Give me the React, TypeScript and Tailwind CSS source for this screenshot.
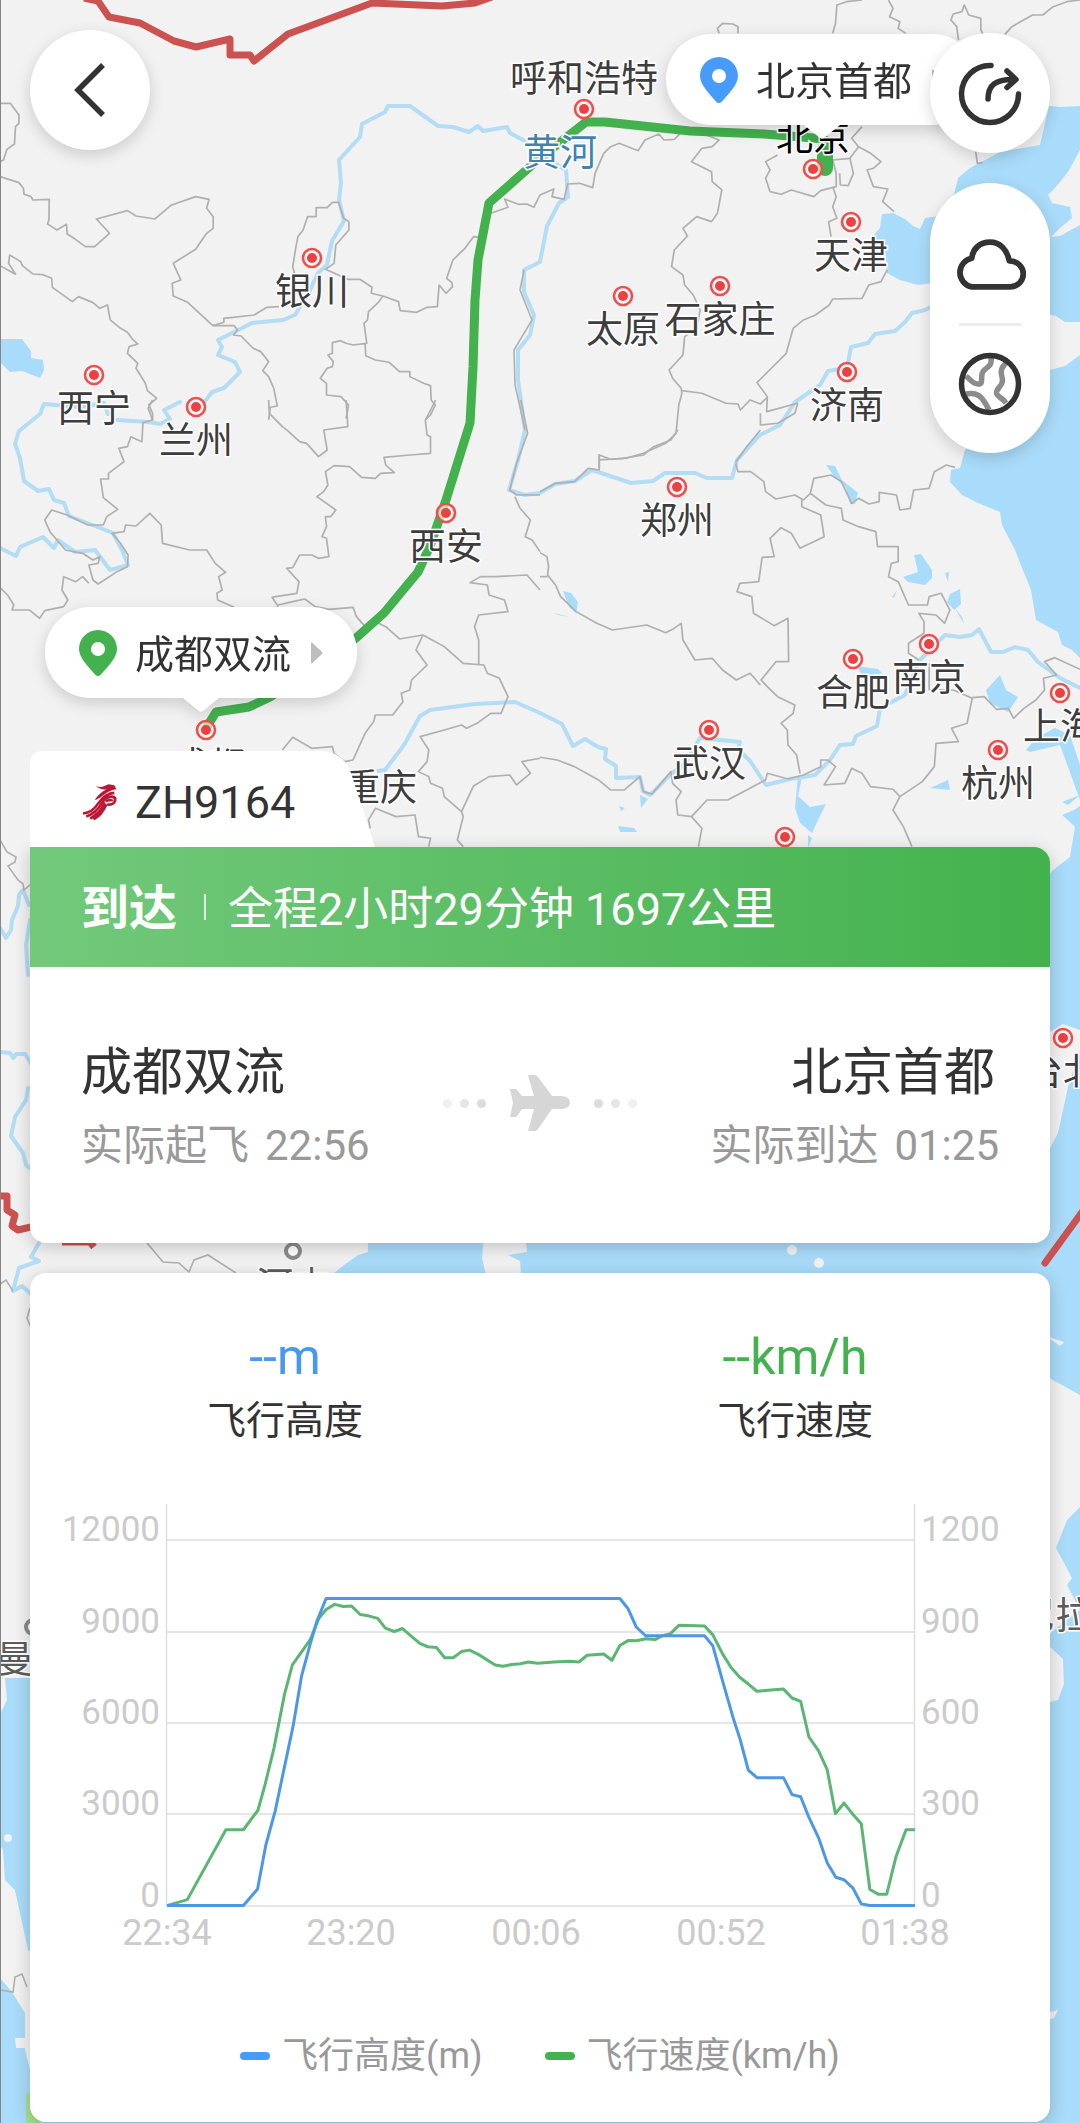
import { ReactNode } from 'react'

type City = { name: string; x: number; y: number; labelX?: number; labelY?: number; kind?: 'capital' | 'foreign' }

const cities: City[] = [
    { name: '呼和浩特', x: 584, y: 109, labelY: 92 },
    { name: '北京', x: 813, y: 169, labelY: 151, kind: 'capital' },
    { name: '天津', x: 851, y: 222 },
    { name: '石家庄', x: 720, y: 286 },
    { name: '太原', x: 623, y: 296 },
    { name: '济南', x: 847, y: 372 },
    { name: '银川', x: 312, y: 258 },
    { name: '西宁', x: 94, y: 375 },
    { name: '兰州', x: 196, y: 407 },
    { name: '西安', x: 446, y: 513 },
    { name: '郑州', x: 677, y: 487 },
    { name: '合肥', x: 853, y: 659 },
    { name: '南京', x: 929, y: 644 },
    { name: '上海', x: 1060, y: 693 },
    { name: '武汉', x: 709, y: 730 },
    { name: '杭州', x: 998, y: 750 },
    { name: '成都', x: 206, y: 730, labelX: 208, labelY: 779 },
    { name: '重庆', x: 352, y: 790, labelX: 380, labelY: 801 },
    { name: '', x: 785, y: 837 },
    { name: '台北', x: 1063, y: 1038 },
    { name: '河内', x: 293, y: 1251, kind: 'foreign', labelY: 1299 },
    { name: '曼谷', x: 33, y: 1627, kind: 'foreign', labelY: 1673 },
    { name: '马尼拉', x: 1037, y: 1580, kind: 'foreign', labelY: 1629 },
]

// province borders, one list per map tile
const northWest = [
    '0,310 30,310 55,345 55,370 45,380 42,432 20,448 10,480 0,485',
    '0,530 55,548 68,565 70,583 90,590 95,600 143,598 142,660 138,672 150,680 165,690 193,673 195,702 215,715 248,740 275,740 318,700 280,657 370,632 395,648 450,657 498,615 568,590 607,598 600,625 619,650 619,685 600,700 568,748 503,790 525,840 500,850 503,888 545,907 618,977 650,967 650,955 738,945 775,922 810,920',
    '0,797 45,823 25,790 28,765 60,785 65,797 95,822 125,824 150,835 152,862 210,905 228,890 270,908 290,925 312,915 320,960 350,985 370,997 385,1018 400,1032 375,1040 370,1060 400,1090 395,1105 422,1150 428,1172 455,1195 432,1215 443,1240 443,1260',
    '618,977 680,977 690,990 678,1005 700,1008 735,1045 757,1055 780,1085 763,1112 780,1130 795,1165 805,1218 785,1222 780,1260',
    '855,820 850,800 858,748 865,710 880,690 893,650 918,650 918,623 950,623 965,607 983,607 998,655 1013,665 1013,690 975,735 970,790 945,808 1010,838 1045,838 1080,862 1078,880 1112,888 1157,905 1162,932 1190,935 1210,937 1240,922 1270,920 1275,855 1295,880 1314,860 1312,848 1297,835 1315,780 1350,745 1375,710 1390,712',
    '1112,888 1098,908 1070,935 1067,960 1057,970 1065,1030 1025,1035 1005,1030 988,1022 965,1028 965,1060 952,1065 968,1085 965,1100 950,1105 930,1135 948,1150 948,1185 990,1190 1012,1215 1005,1255',
    '1060,1030 1062,1067 1090,1080 1130,1087 1160,1115 1190,1115 1190,1130 1230,1150 1250,1157 1252,1200 1264,1215 1250,1245 1235,1260',
    '1425,640 1475,622 1465,597 1505,613 1530,612 1550,622 1568,585',
]

const northEast = [
    '0,585 40,567 35,590 70,598 80,552 115,550 153,563 160,520 185,460 205,440 230,430 285,452 305,420 345,402 360,420 390,418 410,398 470,400 520,420 500,440 470,445 440,485 498,515 500,545 528,570 515,640 498,665 455,650 415,685 428,708 390,750 382,800 415,825 420,855 445,885 465,930 455,985 420,1010 415,1065 375,1110 385,1135 410,1165 412,1180 403,1215 395,1300 365,1330 300,1360 250,1375 172,1380 172,1365 172,1405',
    '520,100 515,85 530,70 560,72 575,80 575,100',
    '850,100 858,70 862,15 890,5 935,0',
    '1012,0 1025,25 1015,50 1045,65 1040,85 1062,100',
    '1215,120 1210,80 1193,60 1200,42 1225,35 1232,15 1245,45 1280,55 1280,90 1290,110',
    '1350,103 1370,80 1430,45 1460,45 1490,20 1530,5 1568,0',
    '690,465 655,485 668,510 655,535 668,575 700,583 730,570 795,590 815,572 860,560 860,520 850,480 900,475 925,440 905,415 935,380',
    '925,440 960,460 990,485 968,505 950,510 968,560 1010,567 995,605 1028,635',
    '900,475 910,520 895,557 872,555 870,520',
    '850,560 860,590 850,620 862,655 838,665 845,710',
    '1008,810 990,845 955,855 935,895 850,897 840,915 800,945 765,960 735,985 715,1060 630,1148 660,1190 658,1235 748,1210 740,1240 690,1270 640,1275 640,1240',
    '412,1172 470,1180 540,1210 575,1212 582,1230 610,1200 640,1212 660,1192',
    '1265,455 1270,490 1285,488',
]

const southWest = [
    '443,0 430,25 443,60 415,68 412,125 380,110 370,140 345,145 360,185 315,220 315,237 292,237 300,293 342,328 310,350 300,375 255,375 195,345 150,330 130,360 145,395 190,450 240,460 270,480 290,470 285,490 258,495 270,540 285,552 340,515 370,500 372,465 350,430 325,400 360,395 365,375 395,378 435,340 468,375 472,430 550,450 600,450 625,490 655,517 635,530 645,570 630,580 632,600 680,622',
    '0,563 22,585 40,615 35,630 85,630 115,655 130,632 185,620 197,600 180,570 185,530 220,545 240,530 258,550',
    '780,0 782,40 820,80 835,92 870,125 890,130 925,170 950,150 940,90 1010,80 1005,0',
    '1265,0 1235,60 1240,105 1250,110 1250,160 1190,165 1115,172 1120,195 1145,218 1105,220 1090,235 1050,232 1015,200 970,197 945,215 952,255 940,275 920,290 975,330 960,350 945,350 948,380 935,410 948,415 955,470 925,475 905,465 870,465 850,503 832,505 868,545 862,580 800,590 790,592 808,620',
    '808,615 850,605 885,597 915,620 955,628 1025,622 1035,650 1060,680 1080,660 1120,680 1160,717 1228,705 1290,740 1345,790 1405,795 1415,820 1450,835 1475,890 1455,940 1425,940 1385,970 1355,985 1340,975 1290,990 1220,1010 1245,1050 1240,1085 1215,1115 1245,1130 1250,1150 1285,1165 1290,1190 1340,1235 1345,1250 1328,1320 1345,1340',
    '1228,705 1208,750 1240,795 1195,840 1190,870 1165,880 1170,905 1140,945 1090,945 1085,965 1060,1000 1025,1080 1000,1085 970,1060 965,1040 905,1045 850,1012 820,1050',
    '1568,570 1530,525 1440,530 1395,530 1365,548 1415,555 1420,585 1465,600 1475,635 1390,645 1378,680 1390,720 1390,795',
    '1340,1235 1375,1158 1420,1130 1480,1125 1500,1155 1540,1120 1515,1085 1568,1075',
    '1075,1285 1070,1260 1090,1225 1150,1250 1205,1245 1215,1310 1250,1315 1245,1340',
    '1495,290 1510,325 1540,360 1525,410 1545,420 1568,455',
    '1512,0 1532,100 1500,190 1480,270 1500,285 1568,285',
]

const southEast = [
    '0,185 45,160 100,155 140,115 172,120 172,75 205,88 240,85 300,75 330,50 380,30 400,0',
    '568,100 575,125 612,125 650,155 655,185 685,207 740,195 765,210 785,190 795,145 845,135 875,155 905,220 925,205 955,222 985,215 985,187 1035,195 1045,240 1075,235 1085,180 1130,175 1145,125 1180,105 1205,112',
    '640,0 600,50 568,97',
    '760,210 760,230 815,255 825,320 755,355 730,310 700,293 668,325 680,380 645,382 635,455 580,460 572,485 615,500 620,550 680,587 720,565 722,695 685,695 642,750 660,770 690,800 740,825 735,850 700,880 718,900 720,945 745,975 755,1030',
    '785,190 830,225 875,235 880,270 925,290 975,305 980,350 1040,350 1040,395 1020,400 1012,440 1040,455 1070,525 1125,525 1130,500 1165,490 1190,540 1175,580 1150,555 1100,550 1115,575 1115,610 1070,640 1070,670 1100,690',
    '0,368 20,380 25,410 22,435 45,465 60,500 105,545 165,580 210,600 310,585 365,608 385,598 410,580 415,630 450,690 500,685 530,720 570,750 610,730 640,765',
    '0,440 22,440',
    '1130,700 1130,780 1200,780 1255,805 1240,880 1195,895 1215,935 1150,940 1145,1010 1110,1055 1045,1100 1025,1140 1055,1190 1080,1250',
    '1255,803 1290,800 1325,838 1360,835 1375,865 1405,835 1440,810 1465,780 1462,745 1500,735 1465,695 1495,683 1568,718',
    '1045,1100 1025,1078 960,1070 935,1030 905,1015 885,1060 825,1065 858,1010 835,990 815,990 815,1010 765,1035 720,1047 660,1030 655,1050 600,1080 545,1110 485,1110 440,1160 470,1195 460,1250',
    '440,1160 400,1155 395,1110 410,1085 385,1060 380,1025 325,1092 300,1085 290,1040 245,1080 205,1080 170,1050 100,1010 50,990 0,982',
]

const altitude =
    '484,1053 706,1053 747,1014 771,910 798,830 850,630 875,510 900,435 920,380 946,328 1799,328 1822,351 1847,396 1874,416 2045,416 2069,440 2098,525 2128,610 2148,660 2172,733 2197,751 2274,751 2299,791 2324,796 2348,845 2376,893 2401,952 2426,986 2450,992 2476,1012 2500,1049 2525,1053 2656,1053'

const speed =
    '484,1053 543,1039 655,874 706,874 748,828 768,770 795,680 825,555 848,485 900,425 925,375 946,354 971,342 996,347 1020,346 1045,366 1069,369 1096,375 1118,398 1144,406 1168,399 1193,417 1218,434 1241,442 1267,444 1290,468 1315,468 1340,453 1362,450 1388,460 1437,485 1460,488 1485,484 1510,482 1533,478 1560,481 1608,478 1653,476 1680,478 1704,462 1752,459 1776,474 1799,439 1824,427 1847,428 1874,423 1901,425 1923,416 1946,411 1971,391 2045,393 2069,414 2098,460 2122,491 2147,514 2172,530 2197,547 2274,542 2299,563 2324,571 2348,655 2376,688 2401,732 2425,836 2450,811 2476,838 2500,860 2525,1015 2549,1026 2574,1026 2601,937 2630,874 2656,874'

const gridLines = [
    { y: 50, left: '12000', right: '1200' },
    { y: 142, left: '9000', right: '900' },
    { y: 233, left: '6000', right: '600' },
    { y: 324, left: '3000', right: '300' },
    { y: 416, left: '0', right: '0' },
]

const times = [
    { x: 137, label: '22:34' },
    { x: 321, label: '23:20' },
    { x: 506, label: '00:06' },
    { x: 691, label: '00:52' },
    { x: 875, label: '01:38' },
]

function Borders({ lines, transform }: { lines: string[]; transform: string }) {
    return (
        <g transform={transform} fill="none" stroke="#b0b0b0" strokeWidth="5" strokeLinejoin="round">
            {lines.map((points) => (
                <polyline key={points} points={points} />
            ))}
        </g>
    )
}

function CityMark({ city }: { city: City }) {
    const foreign = city.kind === 'foreign'
    const color = city.kind === 'capital' ? '#000' : foreign ? '#5c5c5c' : '#3d3d3d'

    return (
        <g>
            {foreign ? (
                <circle cx={city.x} cy={city.y} r="7" fill="#fff" stroke="#8a8a8a" strokeWidth="4" />
            ) : city.name !== '重庆' && (
                <>
                    <circle cx={city.x} cy={city.y} r="9" fill="#fff" fillOpacity="0.6" stroke="#ee4f4c" strokeWidth="2.6" />
                    <circle cx={city.x} cy={city.y} r="5" fill="#ee4040" />
                </>
            )}
            <text
                x={city.labelX ?? city.x}
                y={city.labelY ?? city.y + 47}
                textAnchor="middle"
                fontSize="37"
                fill={color}
                stroke="#fff"
                strokeWidth="3"
                paintOrder="stroke">
                {city.name}
            </text>
        </g>
    )
}

function MapBackground() {
    return (
        <svg
            className="absolute inset-0 h-full w-full"
            viewBox="0 0 1080 2123"
            preserveAspectRatio="xMidYMin slice"
            aria-hidden="true">
            <rect width="1080" height="2123" fill="#f2f2f2" />

            {/* seas and lakes */}
            <g fill="#a9dcfa">
                <path d="M882 214 893 213 905 219 913 226 920 229 925 218 940 216 954 195 958 178 970 168 1000 152 1040 145 1049 106 1060 107 1080 106V150L1068 172 1055 188 1048 195 1052 203 1070 207 1072 218 1060 228 1051 237 1060 236 1080 225V322L1065 322 1056 316 1040 312 1000 275 932 283 918 285 900 280 887 273 885 250 873 236 880 228Z" />
                <path d="M1080 355 1065 366 1050 370 1000 420 965 450 960 468 951 470 950 482 962 495 978 503 1000 512 1002 525 1015 550 1022 568 1031 590 1036 620 1058 632 1062 645 1072 650 1080 658Z" />
                <path d="M1026 750 1036 738 1055 728 1070 735 1080 765V800L1060 745 1030 752Z" />
                <path d="M1080 806 1074 810 1062 815 1070 822 1075 827 1070 857 1053 870 1040 885 900 1080 600 1160 367 1200 368 1252 358 1255 344 1265 334 1273 334 1330 1030 1360 1051 1379 1080 1395Z" />
                <path d="M1080 1507 1067 1520 1056 1548 1072 1578 1067 1585 1080 1610 1060 1625 1051 1633 1040 1650V2123H1080Z" />
                <path d="M5 1678H40V1960L28 1950 15 1890 5 1880 3 1850 0 1845V1714L7 1700ZM0 1978 12 1992 25 2013V2050L30 2070V2123H0Z" />
                <path d="M0 2116H1080V2123H0Z" />
                <path d="M0 339H22L31 351 31 358 43 360 44 370 40 378 22 371 10 372 0 362Z" />
                <path d="M826 465 835 466 842 480 858 493 855 504 850 504 846 488 834 476Z" />
                <path d="M914 555 921 554 932 570 932 578 925 585 908 582 903 577 918 572ZM950 594 960 589 961 604 954 610 947 602ZM954 607 962 617 964 624ZM945 573 949 572 948 582ZM892 597 897 590 894 598Z" />
                <path d="M856 666 878 669 882 673 865 679ZM986 690 1000 675 1006 690 1018 697 1008 712 990 703ZM563 591 571 593 578 602 576 613 569 607ZM554 613 570 617 558 615Z" />
                <path d="M798 775 802 777 798 796 810 807 826 804 818 820 812 833 800 823 795 808ZM808 835 812 838 808 848ZM640 795 648 799 641 808ZM619 806 625 808 621 811ZM618 826 634 828 637 832 620 832ZM930 788 948 780 950 790ZM1062 802 1080 795 1068 805Z" />
            </g>
            <g fill="#f2f2f2">
                <path d="M1050 1032 1063 1024 1080 1030V1050L1068 1087 1058 1133 1048 1152Z" />
                <path d="M484 1235 482 1258 486 1275H521L520 1261 508 1255 527 1252 525 1235Z" />
                <circle cx="792" cy="1250" r="5" />
                <circle cx="819" cy="1263" r="5" />
                <path d="M1045 1642 1063 1659 1064 1684 1058 1700 1045 1703ZM1046 1336 1064 1342 1060 1346ZM1050 2012 1058 2010 1054 2018 1048 2020Z" />
                <circle cx="8" cy="1838" r="4" />
                <path d="M15 2038H30V2048H16Z" />
            </g>
            <path d="M26 2094 40 2090V2123H26Z" fill="#a5e08c" />

            {/* rivers */}
            <g fill="none" stroke="#b3dcf5" strokeWidth="4" strokeLinejoin="round" strokeLinecap="round">
                <path d="M534 146 510 133 507 127 483 131 478 126 469 132 453 127 438 126 410 106 388 106 385 112 362 124 360 137 339 160 341 183 339 200 344 221 332 241 327 265 318 273 310 290 295 315 283 320 252 323 218 340 222 347 218 355 235 362 240 372 224 388 212 392 203 404 195 407M180 402 164 410 170 419 160 424 148 422 117 420M108 414 104 403 80 407 44 404 40 414 19 431 15 444 20 458 24 481 38 491 49 489 54 500 64 503 69 516 95 526 113 533 122 550 128 565 110 570 95 550 75 552 58 540 54 548 43 537 20 547 16 556 0 548" />
                <path d="M546 158 566 170 568 197 559 203 547 226 540 262 524 270V292L534 315 530 335 518 350 518 380 525 430 518 460 509 490 525 495 540 493 555 484 575 481 592 470 631 483 653 481 665 473 695 473 707 478 732 478 737 460 760 435 780 425 795 402 820 385 828 371 847 368 851 347 868 343 875 334 895 331 905 322 912 313 925 310 945 300" />
                <path d="M378 771 385 770 404 745 420 716 430 710 475 704 515 702 540 713 548 717 562 724 573 746 585 739 598 747 606 749 605 759 616 766V778L640 777 643 791 650 795 672 773 684 765 700 738 720 740 740 742 738 749 750 761 766 785 790 779 815 775 830 760 840 745 853 744 856 736 877 726 880 708 905 695 920 660 930 650 945 635 960 637 972 635 979 629 991 652 1003 652 1015 647 1028 650 1038 662 1060 678 1080 688" />
                <path d="M0 928 6 938 11 930 12 920 18 906 19 895 23 890 29 905M30 920 26 945 28 975M0 1052 10 1053 13 1058 16 1054 25 1054 32 1065M28 1088 26 1100 15 1117 11 1136 23 1153 26 1165 32 1170M39 1243 31 1257 39 1261 19 1268 13 1291 22 1286 32 1295" />
            </g>

            <Borders lines={northWest} transform="scale(.3444 .3333)" />
            <Borders lines={northEast} transform="translate(540 0) scale(.3444 .3333)" />
            <Borders lines={southWest} transform="translate(0 400) scale(.3444 .3333)" />
            <Borders lines={southEast} transform="translate(540 430) scale(.3444 .3333)" />
            <path
                d="M0 840 7 852 16 857 15 862 8 866 18 880 23 884 24 890 31 884M524 270 520 290 532 320 514 350 515 385 525 430M147 1243 163 1262 179 1263 189 1272 194 1260 208 1255 236 1273M0 1284 6 1280 13 1291M30 1308 27 1318 31 1328M0 1990 13 1992 15 1977 22 1974 27 1987"
                fill="none"
                stroke="#b0b0b0"
                strokeWidth="1.6"
            />

            {/* national borders */}
            <g fill="none" stroke="#cb5250" strokeWidth="7" strokeLinejoin="round">
                <path d="M84 -2 98 1 109 17 140 23 174 41 196 47 230 39V55H250L254 61 288 34 372 3 442 6 475 3 492 -3" />
                <path d="M0 1196H7V1210L15 1215 12 1226 18 1230 31 1227M62 1242 90 1242 94 1247" />
                <path d="M1045 1263 1085 1208" strokeLinecap="round" />
            </g>

            {/* flown route */}
            <g fill="none" stroke="#42b14e" strokeLinejoin="round" strokeLinecap="round">
                <path
                    d="M205 730 216 712 249 707 270 697 310 672 356 638 384 613 418 572 430 546 446 500 470 423 473 367 475 300 478 260 489 203 540 158 586 122 605 122 690 131 764 134 802 137 824 139"
                    strokeWidth="9"
                />
                <path d="M825 150V168" strokeWidth="16" />
            </g>

            {cities.map((city) => (
                <CityMark key={city.name + city.x} city={city} />
            ))}
            <text x="560" y="166" textAnchor="middle" fontSize="37" fill="#3f83b0" stroke="#fff" strokeWidth="3" paintOrder="stroke">
                黄河
            </text>
            <rect width="1" height="2123" fill="#858585" />
        </svg>
    )
}

function AirportCallout({ name, className }: { name: string; className: string }) {
    return (
        <button
            type="button"
            className={`absolute flex h-[91px] items-center rounded-full bg-white px-[34px] text-[39px] leading-none text-[#333] drop-shadow-[0_5px_8px_rgba(0,0,0,0.16)] ${className}`}>
            <svg className="h-[46px] w-[38px]" viewBox="0 0 38 46" aria-hidden="true">
                <path
                    d="M19 0C8.500 0 0 8.500 0 19c0 9 9 17 16.500 26q2.500 2 5 0C29 36 38 28 38 19 38 8.500 29.500 0 19 0Zm0 12a7 7 0 1 1 0 14 7 7 0 0 1 0-14Z"
                    fill="currentColor"
                    className={name === '成都双流' ? 'text-[#42b14e]' : 'text-[#479bfa]'}
                />
            </svg>
            <span className="ml-[18px] whitespace-nowrap pt-1.5">{name}</span>
            <svg className="ml-5 h-[22px] w-3" viewBox="0 0 12 22" aria-hidden="true">
                <path d="M0 1.500Q0 0 1.500 1L11 10q1 1 0 2L1.500 21Q0 22 0 20.500Z" fill="#bdbdbd" />
            </svg>
            <svg className="absolute left-1/2 top-full h-[14px] w-9 -translate-x-1/2" viewBox="0 0 36 14" aria-hidden="true">
                <path d="M0 0H36L20 13Q18 14.500 16 13Z" fill="#fff" />
            </svg>
        </button>
    )
}

function AirlineLogo() {
    return (
        <svg className="h-9 w-[35px]" viewBox="0 0 105 110" fill="none" stroke="#bd1735" strokeWidth="8" aria-hidden="true">
            <path
                d="M42 6C55 12 66 8 80 1L98 4 104 16C90 18 76 24 62 36 52 44 46 47 38 49 46 34 60 24 74 16 62 18 50 14 42 6Z"
                fill="#bd1735"
                stroke="none"
            />
            <path d="M98 27C72 28 58 46 48 60 38 76 24 88 2 90" />
            <path d="M102 46C96 34 72 36 60 58 48 80 36 92 12 99" />
            <path d="M98 42C106 56 90 66 76 62M72 54C76 48 90 48 92 52M68 56C58 82 46 92 24 106M74 62C62 84 58 94 34 108" />
        </svg>
    )
}

function RoundButton({ label, children }: { label: string; children: ReactNode }) {
    return (
        <button
            type="button"
            aria-label={label}
            className="h-[120px] w-[120px] rounded-full bg-white shadow-[0_5px_16px_rgba(0,0,0,0.16)]">
            <svg
                className="h-full w-full"
                viewBox="0 0 120 120"
                fill="none"
                stroke="#333"
                strokeWidth="5.500"
                strokeLinecap="round"
                strokeLinejoin="round">
                {children}
            </svg>
        </button>
    )
}

function Dots({ className }: { className?: string }) {
    return (
        <span className={`flex gap-2 ${className ?? ''}`}>
            <span className="h-[9px] w-[9px] rounded-full bg-[#f0f0f0]" />
            <span className="h-[9px] w-[9px] rounded-full bg-[#e6e6e6]" />
            <span className="h-[9px] w-[9px] rounded-full bg-[#dcdcdc]" />
        </span>
    )
}

function FlightChart() {
    return (
        <svg className="mt-[45px] w-full text-[36px]" viewBox="0 0 1020 480" role="img" aria-label="飞行高度和飞行速度">
            {gridLines.map((line) => (
                <g key={line.left} fill="#cbcbcb">
                    <line x1="137" x2="885" y1={line.y} y2={line.y} stroke="#dedede" strokeWidth="1.500" />
                    <text x="130" y={line.y + 1} textAnchor="end" fontSize="35">{line.left}</text>
                    <text x="891" y={line.y + 1} fontSize="35">{line.right}</text>
                </g>
            ))}
            <path d="M136.500 14V416M884.500 14V416" stroke="#dedede" strokeWidth="1.500" />
            {times.map((time) => (
                <text key={time.label} x={time.x} y="455" textAnchor="middle" fill="#cbcbcb">{time.label}</text>
            ))}
            <svg
                x="137"
                y="50"
                width="748"
                height="366"
                viewBox="484 190 2172 864"
                preserveAspectRatio="none"
                overflow="visible"
                fill="none"
                strokeWidth="3"
                strokeLinejoin="round">
                <polyline points={speed} stroke="#5bb573" vectorEffect="non-scaling-stroke" />
                <polyline points={altitude} stroke="#4c97e8" vectorEffect="non-scaling-stroke" />
            </svg>
        </svg>
    )
}

export default function App() {
    return (
        <main className="relative min-h-screen overflow-hidden bg-[#f2f2f2] px-[30px] pb-px font-[Roboto,'Noto_Sans_CJK_SC',sans-serif] text-[#333]">
            <MapBackground />
            <AirportCallout name="成都双流" className="left-[45px] top-[607px]" />
            <AirportCallout name="北京首都" className="right-[102px] top-[34px]" />

            <header className="relative flex h-[751px] items-start justify-between pt-[30px]">
                <RoundButton label="返回">
                    <path d="M73 35 48 60 73 85" strokeLinecap="butt" strokeLinejoin="miter" />
                </RoundButton>
                <div className="flex flex-col gap-[30px] pt-[3px]">
                    <RoundButton label="分享">
                        <path d="M61 32.500A28.500 28.500 0 1 0 88.500 61M58 66C58 52 66 46 84 46.500M77 38 86 46.500 77 54.500" />
                    </RoundButton>
                    <div className="flex h-[270px] w-[120px] flex-col items-center rounded-full bg-white shadow-[0_5px_16px_rgba(0,0,0,0.16)]">
                        <button type="button" aria-label="天气" className="flex h-[140px] w-full items-center justify-center pt-6">
                            <svg className="h-[52px] w-[73px]" viewBox="25 57 70 50" fill="none" stroke="#333" strokeWidth="5.500" strokeLinejoin="round">
                                <path d="M42 103A14 14 0 0 1 42 75.500C43 66 50 60 59.600 60 69 60 76 67 78 78 86 78 91.500 84 91.500 90.500 91.500 97.500 86 103 79 103Z" />
                            </svg>
                        </button>
                        <span className="h-[3px] w-[63px] bg-[#ededed]" />
                        <button type="button" aria-label="地图样式" className="flex w-full flex-1 items-center justify-center pb-3">
                            <svg className="h-16 w-16" viewBox="0 0 64 64" fill="none" strokeWidth="5.500">
                                <path
                                    d="M33 5C35 17 25 15 24 22 23 29 25 32 20 32 15 32 14 29 8 24M49 10C40 18 44 22 44.500 28 45 34 38 36 38.500 41 39 45 44 45 48 51M8 42C20 40 24 44 31 58"
                                    stroke="#8c8c8c"
                                />
                                <circle cx="32" cy="32" r="28.500" stroke="#333" />
                            </svg>
                        </button>
                    </div>
                </div>
            </header>

            <section className="relative">
                <div className="relative flex h-24 w-[345px] items-center gap-[18px] pl-[52px] pt-1.5">
                    <svg className="absolute inset-0 h-full w-full" viewBox="0 0 345 96" aria-hidden="true">
                        <path d="M0 96V14Q0 0 14 0H288C306 0 316 8 321 22L345 96Z" fill="#fff" />
                    </svg>
                    <span className="relative"><AirlineLogo /></span>
                    <h1 className="relative text-[45px] leading-none">ZH9164</h1>
                </div>
                <div className="rounded-b-2xl rounded-tr-2xl bg-white shadow-[0_4px_18px_rgba(0,0,0,0.2)]">
                    <div className="flex h-[120px] items-center rounded-tr-2xl bg-linear-to-r from-[#72c97b] to-[#42b24d] px-[51px] text-white">
                        <strong className="pt-1 text-[48px] font-bold leading-none">到达</strong>
                        <span className="ml-[27px] h-[26px] w-0.5 bg-white/80" />
                        <span className="ml-[22px] pt-1 text-[45px] leading-none">全程2小时29分钟 1697公里</span>
                    </div>
                    <div className="flex items-center justify-between px-[51px] pb-[72px] pt-[76px]">
                        <div>
                            <h2 className="text-[51px] leading-[60px]">成都双流</h2>
                            <p className="mt-[18px] flex gap-4 text-[42px] leading-[50px] text-[#999]">
                                <span>实际起飞</span>
                                <time>22:56</time>
                            </p>
                        </div>
                        <div className="mb-2 flex items-center gap-6">
                            <Dots />
                            <svg className="h-[56px] w-[60px]" viewBox="0 0 60 56" fill="#d6d6d6" aria-hidden="true">
                                <path d="M18 0H25Q27 0 28 2L42 21H52Q60 22 60 28 60 33 52 34H42L28 54Q27 56 25 56H18L24 34H12L7 41Q6 42 5 42H0L3 28 0 14H5Q6 14 7 15L12 21H24Z" />
                            </svg>
                            <Dots className="flex-row-reverse" />
                        </div>
                        <div className="text-right">
                            <h2 className="pr-1 text-[51px] leading-[60px]">北京首都</h2>
                            <p className="mt-[18px] flex gap-4 text-[42px] leading-[50px] text-[#999]">
                                <span>实际到达</span>
                                <time>01:25</time>
                            </p>
                        </div>
                    </div>
                </div>
            </section>

            <section className="relative mt-[30px] rounded-2xl bg-white pb-[42px] pt-[54px] shadow-[0_4px_18px_rgba(0,0,0,0.2)]">
                <dl className="grid grid-cols-2 text-center">
                    <div className="flex flex-col-reverse gap-2.5">
                        <dt className="text-[39px] leading-[48px]">飞行高度</dt>
                        <dd className="text-[50px] leading-[60px] text-[#4a97ee]">--m</dd>
                    </div>
                    <div className="flex flex-col-reverse gap-2.5">
                        <dt className="text-[39px] leading-[48px]">飞行速度</dt>
                        <dd className="text-[50px] leading-[60px] text-[#42b14e]">--km/h</dd>
                    </div>
                </dl>
                <FlightChart />
                <ul className="mt-[62px] flex justify-center gap-[62px] text-[36px] leading-[48px] text-[#999]">
                    <li className="flex items-center gap-3">
                        <span className="h-2 w-[30px] rounded-full bg-[#479bfa]" />
                        飞行高度(m)
                    </li>
                    <li className="flex items-center gap-3">
                        <span className="h-2 w-[30px] rounded-full bg-[#42b14e]" />
                        飞行速度(km/h)
                    </li>
                </ul>
            </section>
        </main>
    )
}
